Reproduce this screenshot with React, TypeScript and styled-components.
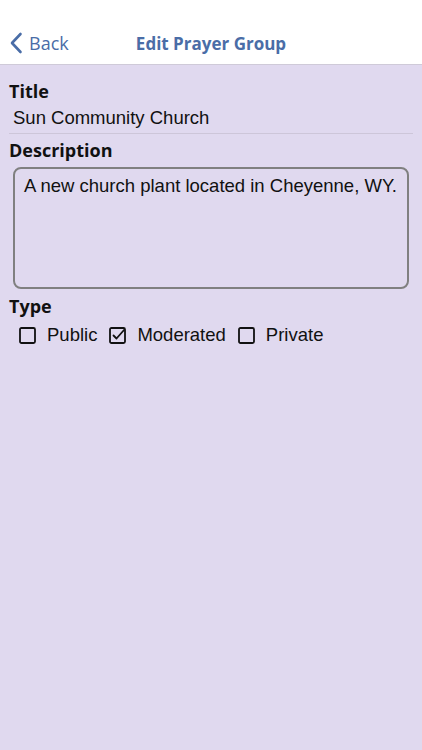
import styled, { createGlobalStyle } from "styled-components";

const GlobalStyle = createGlobalStyle`
  html, body {
    margin: 0;
    padding: 0;
    background: #e0d9ef;
  }
  body {
    font-family: "Liberation Sans", Arial, sans-serif;
  }
`;

type TypeOption = { label: string; checked: boolean };

const typeOptions: TypeOption[] = [
  { label: "Public", checked: false },
  { label: "Moderated", checked: true },
  { label: "Private", checked: false },
];

const CheckIcon = ({ checked }: { checked: boolean }) => (
  <svg width="17" height="17" viewBox="0 0 17 17">
    <rect
      x="1"
      y="1"
      width="15"
      height="15"
      rx="1.5"
      fill="none"
      stroke="#111"
      strokeWidth="1.8"
    />
    {checked && (
      <path
        d="M4.5 8.5 L7.5 11.5 L15 3"
        fill="none"
        stroke="#111"
        strokeWidth="1.8"
        strokeLinecap="round"
        strokeLinejoin="round"
      />
    )}
  </svg>
);

const App = () => {
  return (
    <Screen>
      <GlobalStyle />
      <NavBar>
        <BackButton>
          <svg width="14" height="22" viewBox="0 0 14 22">
            <path
              d="M11.5 2 L3 11 L11.5 20"
              fill="none"
              stroke="#4a6da7"
              strokeWidth="2.6"
              strokeLinecap="round"
              strokeLinejoin="round"
            />
          </svg>
          <span>Back</span>
        </BackButton>
        <NavTitle>Edit Prayer Group</NavTitle>
      </NavBar>

      <Form>
        <Label>Title</Label>
        <TitleValue>Sun Community Church</TitleValue>

        <Label>Description</Label>
        <DescriptionBox>A new church plant located in Cheyenne, WY.</DescriptionBox>

        <Label>Type</Label>
        <TypeRow>
          {typeOptions.map(({ label, checked }) => (
            <TypeOption key={label}>
              <CheckIcon checked={checked} />
              <span>{label}</span>
            </TypeOption>
          ))}
        </TypeRow>
      </Form>
    </Screen>
  );
};

export default App;

const Screen = styled.div`
  min-height: 750px;
  background: #e0d9ef;
`;

const NavBar = styled.div`
  position: relative;
  height: 65px;
  background: #fff;
  border-bottom: 1px solid #cfcad8;
  display: flex;
  align-items: flex-end;
  justify-content: center;
  box-sizing: border-box;
  padding-bottom: 8px;
`;

const BackButton = styled.div`
  position: absolute;
  left: 9px;
  bottom: 9px;
  display: flex;
  align-items: center;
  gap: 6px;
  color: #4a6da7;
  font-family: "Open Sans", sans-serif;
  font-size: 18px;
`;

const NavTitle = styled.div`
  color: #4a6da7;
  font-family: "Open Sans", sans-serif;
  font-weight: 700;
  font-size: 17px;
  line-height: 24px;
`;

const Form = styled.div`
  padding: 14px 9px 0;
  display: flex;
  flex-direction: column;
`;

const Label = styled.div`
  font-family: "Open Sans", sans-serif;
  font-weight: 700;
  font-size: 18px;
  line-height: 24px;
  color: #111;
`;

const TitleValue = styled.div`
  font-size: 18.5px;
  line-height: 22px;
  color: #111;
  padding: 4px 4px 4px;
  margin-bottom: 4px;
  border-bottom: 1px solid #cdc6d9;
`;

const DescriptionBox = styled.div`
  margin: 5px 4px 5px;
  height: 122px;
  box-sizing: border-box;
  border: 2px solid #808080;
  border-radius: 8px;
  padding: 6px 9px;
  font-size: 18.5px;
  line-height: 22px;
  color: #111;
`;

const TypeRow = styled.div`
  display: flex;
  align-items: center;
  gap: 12px;
  padding: 6px 0 0 10px;
`;

const TypeOption = styled.div`
  display: flex;
  align-items: center;
  gap: 11px;
  font-size: 18.5px;
  color: #111;

  svg {
    flex-shrink: 0;
  }
`;
